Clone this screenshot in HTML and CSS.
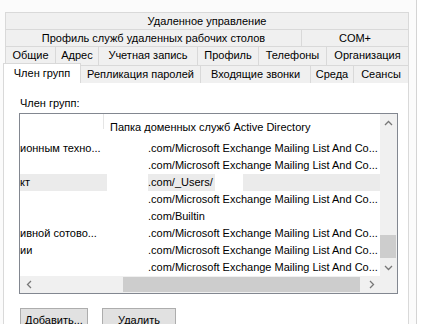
FILE: index.html
```html
<!DOCTYPE html>
<html lang="ru">
<head>
    <meta charset="UTF-8">
    <title>Свойства: Член групп</title>
    <link rel="stylesheet" href="styles.css">
</head>
<body>
    <div class="dialog">
        <div class="tabs">
            <div class="tab-row row-1">
                <div class="tab">Удаленное управление</div>
            </div>
            <div class="tab-row row-2">
                <div class="tab">Профиль служб удаленных рабочих столов</div>
                <div class="tab">COM+</div>
            </div>
            <div class="tab-row row-3">
                <div class="tab">Общие</div>
                <div class="tab">Адрес</div>
                <div class="tab">Учетная запись</div>
                <div class="tab">Профиль</div>
                <div class="tab">Телефоны</div>
                <div class="tab">Организация</div>
            </div>
            <div class="tab-row row-4">
                <div class="tab active">Член групп</div>
                <div class="tab">Репликация паролей</div>
                <div class="tab">Входящие звонки</div>
                <div class="tab">Среда</div>
                <div class="tab">Сеансы</div>
            </div>
        </div>

        <div class="panel">
            <div class="field-label">Член групп:</div>

            <div class="listview">
                <div class="lv-main">
                    <div class="lv-content">
                        <div class="lv-header">
                            <div class="col-1"></div>
                            <div class="col-2">Папка доменных служб Active Directory</div>
                        </div>
                        <div class="lv-row">
                            <div class="col-1">ионным техно...</div>
                            <div class="col-2">.com/Microsoft Exchange Mailing List And Co...</div>
                        </div>
                        <div class="lv-row">
                            <div class="col-1"></div>
                            <div class="col-2">.com/Microsoft Exchange Mailing List And Co...</div>
                        </div>
                        <div class="lv-row selected">
                            <div class="col-1">кт</div>
                            <div class="col-2"><span class="blank lead"></span><span class="path">.com/_Users/</span><span class="blank tail"></span></div>
                        </div>
                        <div class="lv-row">
                            <div class="col-1"></div>
                            <div class="col-2">.com/Microsoft Exchange Mailing List And Co...</div>
                        </div>
                        <div class="lv-row">
                            <div class="col-1"></div>
                            <div class="col-2">.com/Builtin</div>
                        </div>
                        <div class="lv-row">
                            <div class="col-1">ивной сотово...</div>
                            <div class="col-2">.com/Microsoft Exchange Mailing List And Co...</div>
                        </div>
                        <div class="lv-row">
                            <div class="col-1">ии</div>
                            <div class="col-2">.com/Microsoft Exchange Mailing List And Co...</div>
                        </div>
                        <div class="lv-row">
                            <div class="col-1"></div>
                            <div class="col-2">.com/Microsoft Exchange Mailing List And Co...</div>
                        </div>
                    </div>
                    <div class="vscroll">
                        <div class="arrow">
                            <svg width="9" height="6" viewBox="0 0 9 6"><path d="M1 5 L4.5 1.5 L8 5" fill="none" stroke="#777" stroke-width="1.3"/></svg>
                        </div>
                        <div class="vtrack">
                            <div class="vthumb"></div>
                        </div>
                        <div class="arrow">
                            <svg width="9" height="6" viewBox="0 0 9 6"><path d="M1 1 L4.5 4.5 L8 1" fill="none" stroke="#777" stroke-width="1.3"/></svg>
                        </div>
                    </div>
                </div>
                <div class="lv-bottom">
                    <div class="hscroll">
                        <div class="arrow">
                            <svg width="6" height="9" viewBox="0 0 6 9"><path d="M5 1 L1.5 4.5 L5 8" fill="none" stroke="#777" stroke-width="1.3"/></svg>
                        </div>
                        <div class="htrack">
                            <div class="hthumb"></div>
                        </div>
                        <div class="arrow">
                            <svg width="6" height="9" viewBox="0 0 6 9"><path d="M1 1 L4.5 4.5 L1 8" fill="none" stroke="#777" stroke-width="1.3"/></svg>
                        </div>
                    </div>
                    <div class="corner"></div>
                </div>
            </div>

            <div class="buttons">
                <button class="btn btn-add">Добавить...</button>
                <button class="btn btn-remove">Удалить</button>
            </div>
        </div>
    </div>
</body>
</html>
```

FILE: styles.css
```css
body {
    margin: 0;
    width: 430px;
    height: 324px;
    overflow: hidden;
    background: #ffffff;
    font-family: "Segoe UI", "Liberation Sans", Arial, sans-serif;
    font-size: 11px;
    color: #000;
}
.dialog {
    width: 417px;
    height: 324px;
    box-sizing: border-box;
    padding-top: 12px;
    background: #fbfbfb;
    border-right: 1px solid #d4d4d4;
}

/* tab strip */
.tabs {
    margin-left: 5px;
    width: 404px;
}
.tab-row {
    display: grid;
    height: 17px;
}
.row-1 { grid-template-columns: 404px; }
.row-2 { grid-template-columns: 296px 108px; }
.row-3 { grid-template-columns: 50px 43px 99px 61px 68px 83px; height: 19px; }
.row-4 { grid-template-columns: 75px 120px 110px 43px 56px; }
.tab {
    box-sizing: border-box;
    height: 100%;
    border-top: 1px solid #d9d9d9;
    border-left: 1px solid #d9d9d9;
    background: #f0f0f0;
    text-align: center;
    line-height: 17px;
    white-space: nowrap;
    overflow: hidden;
}
.tab:last-child { border-right: 1px solid #d9d9d9; }
.tab.active {
    position: relative;
    z-index: 1;
    height: 20px;
    margin: -2px -1px 0 -2px;
    border-right: 1px solid #d9d9d9;
    background: #fff;
    line-height: 19px;
}

/* page */
.panel {
    margin-left: 3px;
    width: 406px;
    height: 242px;
    box-sizing: border-box;
    border: 1px solid #d9d9d9;
    border-bottom: none;
    background: #fff;
    padding: 12px 0 0 15px;
}
.field-label {
    line-height: 16px;
    margin-left: 1px;
    margin-bottom: 2px;
}

/* list view */
.listview {
    width: 379px;
    box-sizing: border-box;
    border: 1px solid #828790;
    background: #fff;
}
.lv-main {
    display: flex;
}
.lv-content {
    width: 360px;
    overflow: hidden;
}
.lv-header {
    display: flex;
    height: 26px;
    line-height: 26px;
}
.lv-header .col-1 {
    border-right: 1px solid #e5e5e5;
    height: 15px;
}
.lv-header .col-2 {
    padding-left: 6px;
}
.lv-row {
    display: flex;
    height: 17px;
    line-height: 17px;
    white-space: nowrap;
}
.col-1 {
    width: 84px;
    box-sizing: border-box;
    flex: none;
}
.lv-row .col-2 {
    padding-left: 44px;
    display: flex;
}
.lv-row.selected {
    background: #ebebeb;
}
.lv-row.selected .col-2 {
    padding-left: 3px;
}
.blank {
    background: #fff;
}
.blank.lead { width: 41px; }
.blank.tail { width: 28px; margin-left: 2px; }

/* scroll bars */
.vscroll {
    width: 17px;
    display: flex;
    flex-direction: column;
    background: #f0f0f0;
}
.vscroll .arrow {
    height: 17px;
    display: flex;
    align-items: center;
    justify-content: center;
}
.vtrack {
    flex: 1;
    padding: 104px 1px 0 0;
}
.vthumb {
    height: 23px;
    background: #cdcdcd;
}
.lv-bottom {
    display: flex;
    height: 17px;
}
.hscroll {
    width: 360px;
    display: flex;
    background: #f0f0f0;
}
.hscroll .arrow {
    width: 17px;
    display: flex;
    align-items: center;
    justify-content: center;
}
.htrack {
    flex: 1;
    padding-left: 86px;
}
.hthumb {
    width: 237px;
    height: 15px;
    margin-top: 1px;
    background: #cdcdcd;
}
.corner {
    width: 17px;
    background: #f0f0f0;
}

/* buttons */
.buttons {
    display: flex;
    gap: 14px;
    margin-top: 14px;
    margin-left: 1px;
}
.btn {
    height: 23px;
    box-sizing: border-box;
    border: 1px solid #adadad;
    background: #e1e1e1;
    font-family: inherit;
    font-size: 11px;
    padding: 0;
}
.btn-add { width: 68px; }
.btn-remove { width: 74px; }
```
